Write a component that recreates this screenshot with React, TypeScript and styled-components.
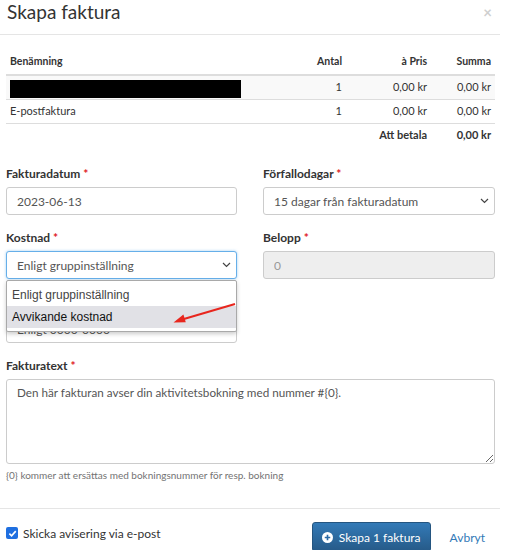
import { createGlobalStyle } from "styled-components";
import styled from "styled-components";

const GlobalStyle = createGlobalStyle`
  body {
    margin: 0;
    background: #ffffff;
    font-family: Lato, "Open Sans", sans-serif;
    color: #333;
  }
`;

const rows = [
  { name: "", qty: "1", price: "0,00 kr", sum: "0,00 kr", masked: true },
  { name: "E-postfaktura", qty: "1", price: "0,00 kr", sum: "0,00 kr", masked: false },
];

export default function App() {
  return (
    <>
      <GlobalStyle />
      <Modal>
        <Header>
          <Title>Skapa faktura</Title>
          <Close>×</Close>
        </Header>
        <Body>
          <Table>
            <thead>
              <tr>
                <Th>Benämning</Th>
                <Th $right $w={60}>Antal</Th>
                <Th $right $w={77}>à Pris</Th>
                <Th $right $w={56}>Summa</Th>
              </tr>
            </thead>
            <tbody>
              {rows.map((r, i) => (
                <Tr key={i} $striped={i % 2 === 0}>
                  <Td>{r.masked ? <Masked /> : r.name}</Td>
                  <Td $right>{r.qty}</Td>
                  <Td $right>{r.price}</Td>
                  <Td $right>{r.sum}</Td>
                </Tr>
              ))}
              <Tr>
                <Td />
                <Td />
                <Td $right $bold>Att betala</Td>
                <Td $right $bold>0,00 kr</Td>
              </Tr>
            </tbody>
          </Table>

          <FormGrid>
            <Group>
              <Label>
                Fakturadatum <Req>*</Req>
              </Label>
              <Input defaultValue="2023-06-13" />
            </Group>
            <Group>
              <Label>
                Förfallodagar <Req>*</Req>
              </Label>
              <SelectBox>
                <span>15 dagar från fakturadatum</span>
                <Chevron />
              </SelectBox>
            </Group>
            <Group>
              <Label>
                Kostnad <Req>*</Req>
              </Label>
              <DropWrap>
                <SelectBox $focused>
                  <span>Enligt gruppinställning</span>
                  <Chevron />
                </SelectBox>
                <Dropdown>
                  <Option>Enligt gruppinställning</Option>
                  <Option $active>Avvikande kostnad</Option>
                  <Arrow width="64" height="24" viewBox="0 0 64 24">
                    <line x1="63" y1="2" x2="11" y2="17.3" stroke="#e8261e" strokeWidth="2" />
                    <polygon points="1.5,20.5 13.8,20.3 11.4,12.6" fill="#e8261e" />
                  </Arrow>
                </Dropdown>
              </DropWrap>
              <Input $below defaultValue="Enligt 0000-0000" />
            </Group>
            <Group>
              <Label>
                Belopp <Req>*</Req>
              </Label>
              <Input $disabled disabled defaultValue="0" />
            </Group>
          </FormGrid>

          <Label>
            Fakturatext <Req>*</Req>
          </Label>
          <TextArea defaultValue="Den här fakturan avser din aktivitetsbokning med nummer #{0}." />
          <Help>{"{0} kommer att ersättas med bokningsnummer för resp. bokning"}</Help>
        </Body>
        <Footer>
          <CheckLabel>
            <CheckBox>
              <svg width="9" height="9" viewBox="0 0 10 10">
                <path d="M1.5 5.2 L4 7.6 L8.6 2.4" stroke="#fff" strokeWidth="1.8" fill="none" />
              </svg>
            </CheckBox>
            Skicka avisering via e-post
          </CheckLabel>
          <Actions>
            <PrimaryButton>
              <svg width="11" height="11" viewBox="0 0 12 12">
                <circle cx="6" cy="6" r="6" fill="#fff" />
                <path d="M6 3v6M3 6h6" stroke="#2a6aa6" strokeWidth="1.8" />
              </svg>
              Skapa 1 faktura
            </PrimaryButton>
            <LinkButton>Avbryt</LinkButton>
          </Actions>
        </Footer>
      </Modal>
    </>
  );
}

const Chevron = () => (
  <svg width="9" height="6" viewBox="0 0 9 6">
    <path d="M1 1 L4.5 4.5 L8 1" stroke="#444" strokeWidth="1.2" fill="none" />
  </svg>
);

const Modal = styled.div`
  width: 500px;
  background: #fff;
`;

const Header = styled.div`
  height: 35px;
  border-bottom: 1px solid #e5e5e5;
  display: flex;
  justify-content: space-between;
  align-items: flex-start;
  padding: 0 8px 0 7px;
  box-sizing: border-box;
`;

const Title = styled.h4`
  margin: 0;
  font-size: 19px;
  font-weight: 400;
  line-height: 24px;
  color: #333;
`;

const Close = styled.span`
  font-size: 15px;
  font-weight: 700;
  line-height: 24px;
  color: #cfcfcf;
`;

const Body = styled.div`
  padding: 12px 5px 0 6px;
`;

const Table = styled.table`
  width: 100%;
  border-collapse: collapse;
  font-size: 11px;
  color: #333;
  margin-bottom: 19px;
`;

const Th = styled.th<{ $right?: boolean; $w?: number }>`
  text-align: ${(p) => (p.$right ? "right" : "left")};
  width: ${(p) => (p.$w ? `${p.$w}px` : "auto")};
  font-size: 10.5px;
  font-weight: 700;
  padding: 8px 4px 7px;
  border-bottom: 2px solid #ddd;
`;

const Tr = styled.tr<{ $striped?: boolean }>`
  background: ${(p) => (p.$striped ? "#f9f9f9" : "transparent")};
`;

const Td = styled.td<{ $right?: boolean; $bold?: boolean }>`
  text-align: ${(p) => (p.$right ? "right" : "left")};
  font-weight: ${(p) => (p.$bold ? 700 : 400)};
  height: 24px;
  line-height: 14px;
  padding: 0 4px;
  border-top: 1px solid #ddd;
  vertical-align: middle;
  box-sizing: border-box;
`;

const Masked = styled.div`
  width: 231px;
  height: 18px;
  background: #000;
  margin-top: 4px;
`;

const FormGrid = styled.div`
  display: grid;
  grid-template-columns: 231px 232px;
  column-gap: 26px;
`;

const Group = styled.div`
  margin-bottom: 15px;
`;

const Label = styled.label`
  display: block;
  font-size: 12px;
  font-weight: 700;
  line-height: 15px;
  margin-bottom: 6px;
  color: #333;
`;

const Req = styled.span`
  color: #e0181e;
`;

const Input = styled.input<{ $disabled?: boolean; $below?: boolean }>`
  display: block;
  width: 100%;
  box-sizing: border-box;
  height: 28px;
  padding: 0 10px;
  border: 1px solid #ccc;
  border-radius: 3px;
  background: ${(p) => (p.$disabled ? "#eee" : "#fff")};
  color: ${(p) => (p.$disabled ? "#999" : "#555")};
  font-family: Lato, "Open Sans", sans-serif;
  font-size: 12px;
  margin-top: ${(p) => (p.$below ? "36px" : "0")};
  outline: none;
`;

const DropWrap = styled.div`
  position: relative;
`;

const SelectBox = styled.div<{ $focused?: boolean }>`
  height: 28px;
  box-sizing: border-box;
  display: flex;
  align-items: center;
  justify-content: space-between;
  padding: 0 5px 0 10px;
  border: 1px solid ${(p) => (p.$focused ? "#66afe9" : "#ccc")};
  border-radius: 3px;
  box-shadow: ${(p) => (p.$focused ? "0 0 3px rgba(102,175,233,0.6)" : "none")};
  font-size: 12px;
  color: #555;
  background: #fff;
`;

const Dropdown = styled.div`
  position: absolute;
  top: 29px;
  left: 0;
  right: 0;
  z-index: 2;
  background: #fff;
  border: 1px solid #a9a9a9;
  border-radius: 2px;
  box-shadow: 0 2px 4px rgba(0, 0, 0, 0.2);
  padding: 3px 0 3px;
  font-family: "Liberation Sans", Arial, sans-serif;
  font-size: 12px;
`;

const Option = styled.div<{ $active?: boolean }>`
  height: 22px;
  line-height: 22px;
  padding: 0 5px;
  color: ${(p) => (p.$active ? "#111" : "#444")};
  background: ${(p) => (p.$active ? "#e1e1e6" : "transparent")};
`;

const Arrow = styled.svg`
  position: absolute;
  right: 0;
  top: 21px;
`;

const TextArea = styled.textarea`
  display: block;
  width: 100%;
  box-sizing: border-box;
  height: 85px;
  padding: 5px 10px;
  border: 1px solid #ccc;
  border-radius: 3px;
  font-family: Lato, "Open Sans", sans-serif;
  font-size: 11.7px;
  color: #555;
  resize: vertical;
  outline: none;
`;

const Help = styled.div`
  font-size: 10px;
  color: #737373;
  margin-top: 5px;
`;

const Footer = styled.div`
  margin-top: 27px;
  border-top: 1px solid #e5e5e5;
  display: flex;
  justify-content: space-between;
  align-items: center;
  padding: 13px 6px 0 6px;
`;

const CheckLabel = styled.label`
  display: flex;
  align-items: center;
  gap: 5px;
  font-size: 12px;
  color: #333;
  margin-top: -8px;
`;

const CheckBox = styled.span`
  width: 12px;
  height: 12px;
  border-radius: 2px;
  background: #1f6fe0;
  display: inline-flex;
  align-items: center;
  justify-content: center;
`;

const Actions = styled.div`
  display: flex;
  align-items: center;
  gap: 19px;
`;

const PrimaryButton = styled.button`
  display: inline-flex;
  align-items: center;
  gap: 6px;
  height: 30px;
  padding: 0 9px;
  border: 1px solid #245580;
  border-radius: 3px;
  background: linear-gradient(#337ab7, #265a88);
  color: #fff;
  font-family: Lato, "Open Sans", sans-serif;
  font-size: 12px;
`;

const LinkButton = styled.a`
  font-size: 12px;
  color: #337ab7;
  margin-right: 9px;
`;
